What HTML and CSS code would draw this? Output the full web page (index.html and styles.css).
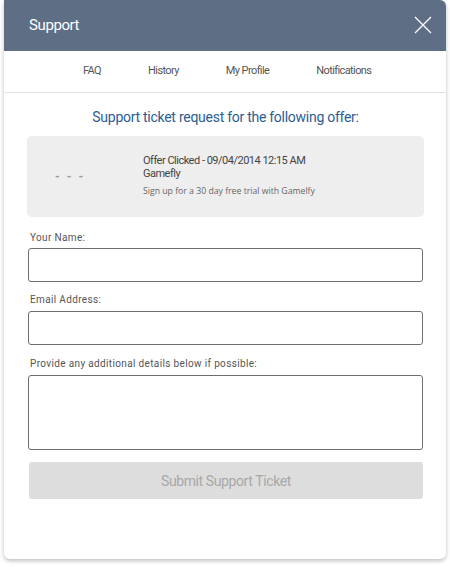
FILE: index.html
```html
<!DOCTYPE html>
<html>
<head>
<meta charset="utf-8">
<link rel="stylesheet" href="styles.css">
</head>
<body>
<div class="card">
  <header class="head">
    <span class="title">Support</span>
    <svg class="close" width="18" height="18" viewBox="0 0 18 18"><path d="M1 1L17 17M17 1L1 17" stroke="#fff" stroke-width="1.3" fill="none"/></svg>
  </header>
  <nav class="nav">
    <span class="nav-item">FAQ</span>
    <span class="nav-item">History</span>
    <span class="nav-item">My Profile</span>
    <span class="nav-item">Notifications</span>
  </nav>
  <main class="body">
    <h1 class="heading">Support ticket request for the following offer:</h1>
    <div class="offer">
      <div class="offer-logo">- - -</div>
      <div class="offer-info">
        <div class="offer-line">Offer Clicked - 09/04/2014 12:15 AM</div>
        <div class="offer-line">Gamefly</div>
        <div class="offer-desc">Sign up for a 30 day free trial with Gamelfy</div>
      </div>
    </div>
    <form class="form">
      <label class="label first">Your Name:</label>
      <div class="input"></div>
      <label class="label">Email Address:</label>
      <div class="input"></div>
      <label class="label third">Provide any additional details below if possible:</label>
      <div class="input textarea"></div>
      <div class="submit">Submit Support Ticket</div>
    </form>
  </main>
</div>
</body>
</html>
```
FILE: styles.css
```css
* { box-sizing: border-box; }
html, body { margin: 0; padding: 0; background: #fff; }
body { font-family: Roboto, "Liberation Sans", sans-serif; width: 450px; height: 567px; }
.card {
  margin: 0 4px;
  width: 442px;
  height: 559px;
  background: #fff;
  border-radius: 0 6px 6px 6px;
  box-shadow: 0 2px 4px rgba(0,0,0,0.25);
  overflow: hidden;
  display: flex;
  flex-direction: column;
}
.head {
  height: 51px;
  background: #5e6e84;
  display: flex;
  align-items: center;
  justify-content: space-between;
  padding: 0 14px 0 25px;
  flex-shrink: 0;
}
.title { color: #fff; font-size: 15px; letter-spacing: -0.4px; margin-top: -2px; }
.close { display: block; margin-top: -1px; }
.nav {
  height: 42px;
  border-bottom: 1px solid #e2e2e2;
  display: flex;
  align-items: center;
  padding: 0 0 3px 79px;
  flex-shrink: 0;
}
.nav-item { color: #555; font-size: 11px; letter-spacing: -0.6px; margin-right: 47px; }
.body { padding: 14px 22px 0 23px; }
.heading {
  margin: 0;
  text-align: center;
  font-weight: 400;
  font-size: 14px;
  color: #2c5d8f;
  letter-spacing: -0.27px;
  line-height: 20px;
}
.offer {
  margin-top: 9px;
  height: 81px;
  background: #eeeeee;
  border-radius: 5px;
  display: flex;
  align-items: center;
}
.offer-logo { width: 116px; padding-left: 28px; color: #9a9a9a; font-size: 12px; font-weight: 700; letter-spacing: 2px; }
.offer-info { color: #444; margin-top: -2px; }
.offer-line { font-size: 11px; line-height: 13px; letter-spacing: -0.5px; }
.offer-desc { font-family: "Open Sans", sans-serif; font-size: 8.7px; color: #666; margin-top: 5px; }
.form { display: flex; flex-direction: column; padding: 0 1px; }
.label { font-size: 10px; color: #555; margin: 12px 0 5px 2px; letter-spacing: 0.35px; line-height: 12px; }
.label.first { margin-top: 15px; margin-bottom: 4px; }
.label.third { margin-top: 13px; }
.input { height: 34px; border: 1px solid #6e6e6e; border-radius: 3px; background: #fff; }
.textarea { height: 75px; }
.submit {
  margin-top: 12px;
  height: 37px;
  background: #dddddd;
  border-radius: 3px;
  margin-left: 1px;
  display: flex;
  align-items: center;
  justify-content: center;
  color: #a8a8a8;
  font-size: 14px;
  letter-spacing: -0.4px;
}
```
